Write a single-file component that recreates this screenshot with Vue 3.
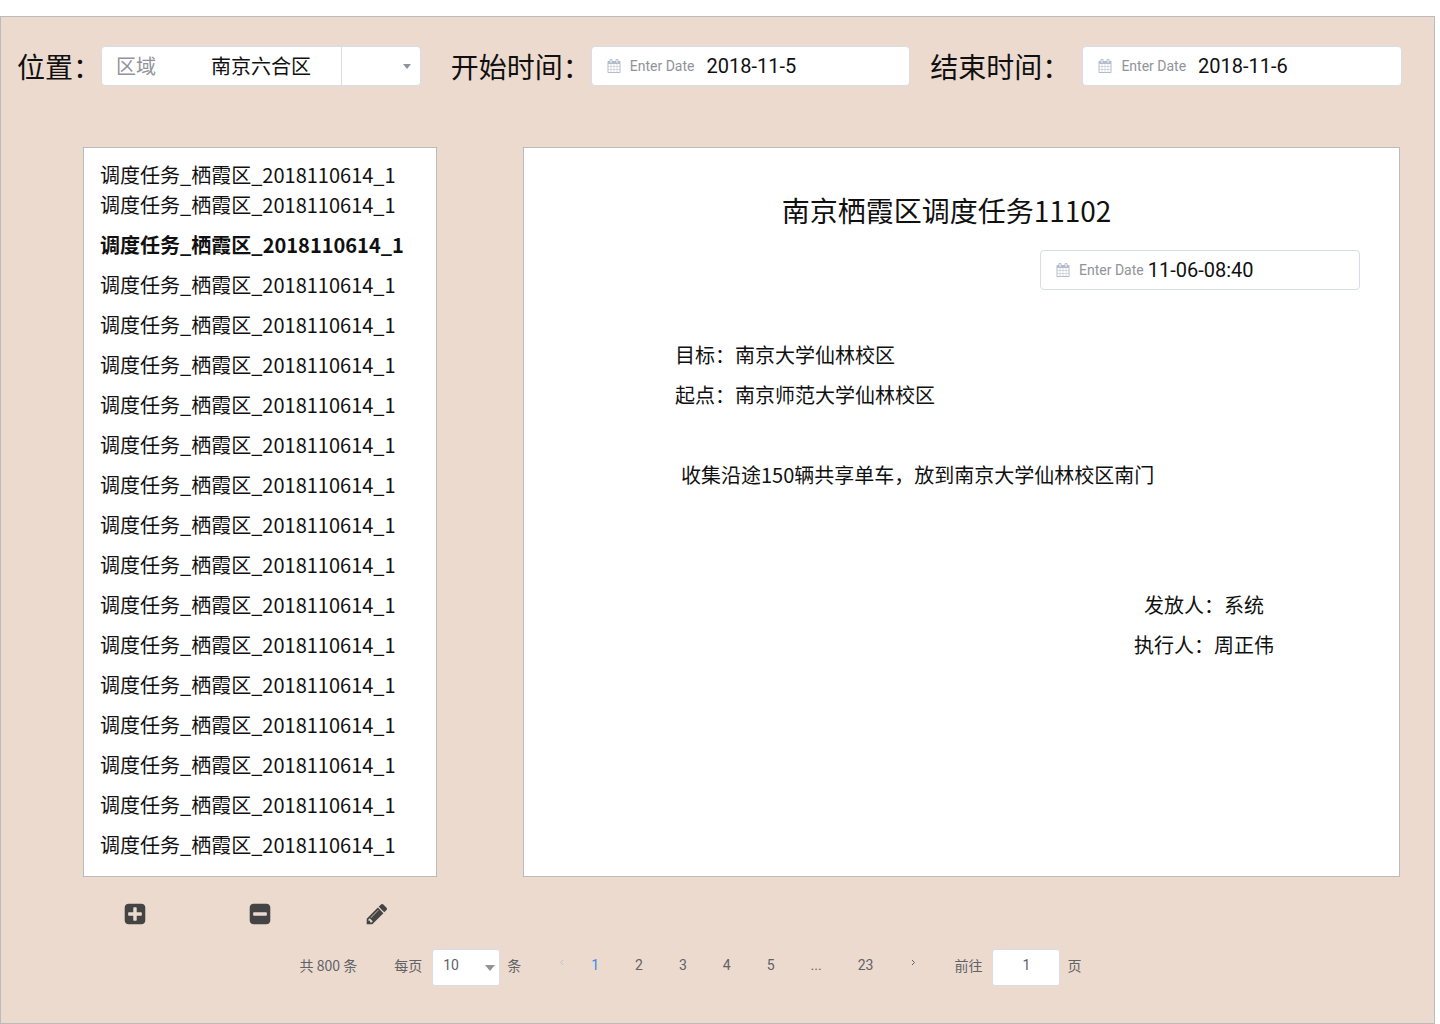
<script setup>
import { ref } from 'vue'

const region = ref('南京六合区')
const startDate = ref('2018-11-5')
const endDate = ref('2018-11-6')
const taskTime = ref('11-06-08:40')
const pageSize = ref('10')
const jumpTo = ref('1')
const currentPage = ref('1')
const selected = ref(2)

const tasks = Array.from({ length: 18 }, () => '调度任务_栖霞区_2018110614_1')
const pages = ['1', '2', '3', '4', '5', '...', '23']

const calendarPath =
  'M192 1664h288v-288h-288v288zm352 0h320v-288h-320v288zm-352-352h288v-320h-288v320zm352 0h320v-320h-320v320zm-352-384h288v-288h-288v288zm736 736h320v-288h-320v288zm-384-736h320v-288h-320v288zm768 736h288v-288h-288v288zm-384-352h320v-320h-320v320zm-352-864v-288q0-13-9.5-22.5t-22.5-9.5h-64q-13 0-22.5 9.5t-9.5 22.5v288q0 13 9.5 22.5t22.5 9.5h64q13 0 22.5-9.5t9.5-22.5zm736 864h288v-320h-288v320zm-384-384h320v-288h-320v288zm384 0h288v-288h-288v288zm32-480v-288q0-13-9.5-22.5t-22.5-9.5h-64q-13 0-22.5 9.5t-9.5 22.5v288q0 13 9.5 22.5t22.5 9.5h64q13 0 22.5-9.5t9.5-22.5zm384-64v1280q0 52-38 90t-90 38h-1408q-52 0-90-38t-38-90v-1280q0-52 38-90t90-38h128v-96q0-66 47-113t113-47h64q66 0 113 47t47 113v96h384v-96q0-66 47-113t113-47h64q66 0 113 47t47 113v96h128q52 0 90 38t38 90z'
const squarePath =
  'm256-544v960q0 119-84.5 203.5t-203.5 84.5h-960q-119 0-203.5-84.5t-84.5-203.5v-960q0-119 84.5-203.5t203.5-84.5h960q119 0 203.5 84.5t84.5 203.5z'
const actions = [
  {
    label: '添加',
    path:
      'M1408 960v-128q0-26-19-45t-45-19h-320v-320q0-26-19-45t-45-19h-128q-26 0-45 19t-19 45v320h-320q-26 0-45 19t-19 45v128q0 26 19 45t45 19h320v320q0 26 19 45t45 19h128q26 0 45-19t19-45v-320h320q26 0 45-19t19-45z' +
      squarePath,
  },
  {
    label: '删除',
    path:
      'M1408 960v-128q0-26-19-45t-45-19h-896q-26 0-45 19t-19 45v128q0 26 19 45t45 19h896q26 0 45-19t19-45z' +
      squarePath,
  },
  {
    label: '编辑',
    path:
      'M491 1536l91-91-235-235-91 91v107h128v128h107zm523-928q0-22-22-22-10 0-17 7l-542 542q-7 7-7 17 0 22 22 22 10 0 17-7l542-542q7-7 7-17zm-54-192l416 416-832 832h-416v-416zm683 96q0 53-37 90l-166 166-416-416 166-165q36-38 90-38 53 0 91 38l235 234q37 39 37 91z',
  },
]
</script>

<template>
  <main class="page">
    <form class="filters" @submit.prevent>
      <div class="filter">
        <label class="filter-label" for="region">位置：</label>
        <div class="field">
          <span class="field-prefix">区域</span>
          <div class="region">
            <select id="region" v-model="region" class="region-select">
              <option>南京六合区</option>
            </select>
            <span class="region-toggle"><i class="caret"></i></span>
          </div>
        </div>
      </div>
      <div class="filter filter-start">
        <label class="filter-label" for="start">开始时间：</label>
        <div class="field date">
          <svg class="calendar" viewBox="0 0 1792 1792"><path :d="calendarPath" /></svg>
          <label class="date-hint" for="start">Enter Date</label>
          <input id="start" v-model="startDate" class="date-input" type="text" />
        </div>
      </div>
      <div class="filter filter-end">
        <label class="filter-label" for="end">结束时间：</label>
        <div class="field date">
          <svg class="calendar" viewBox="0 0 1792 1792"><path :d="calendarPath" /></svg>
          <label class="date-hint" for="end">Enter Date</label>
          <input id="end" v-model="endDate" class="date-input" type="text" />
        </div>
      </div>
    </form>

    <div class="content">
      <ul class="tasks">
        <li v-for="(task, i) in tasks" :key="i">
          <button
            type="button"
            class="task"
            :class="{ active: i === selected }"
            @click="selected = i"
          >{{ task }}</button>
        </li>
      </ul>

      <article class="detail">
        <h1 class="title">南京栖霞区调度任务11102</h1>
        <div class="field date date-compact">
          <svg class="calendar" viewBox="0 0 1792 1792"><path :d="calendarPath" /></svg>
          <label class="date-hint" for="time">Enter Date</label>
          <input id="time" v-model="taskTime" class="date-input" type="text" />
        </div>
        <div class="body">
          <p>目标：南京大学仙林校区</p>
          <p>起点：南京师范大学仙林校区</p>
          <p class="note">收集沿途150辆共享单车，放到南京大学仙林校区南门</p>
        </div>
        <div class="signature">
          <p>发放人：系统</p>
          <p>执行人：周正伟</p>
        </div>
      </article>
    </div>

    <div class="actions">
      <button
        v-for="action in actions"
        :key="action.label"
        type="button"
        class="action"
        :aria-label="action.label"
      >
        <svg viewBox="0 0 1792 1792"><path :d="action.path" /></svg>
      </button>
    </div>

    <nav class="pagination">
      <span class="total">共 800 条</span>
      <div class="size">
        <label class="before-box" for="size">每页</label>
        <div class="size-box">
          <select id="size" v-model="pageSize" class="box size-select">
            <option>10</option>
          </select>
          <i class="caret caret-large"></i>
        </div>
        <span class="after-box">条</span>
      </div>
      <div class="pager">
        <button type="button" class="arrow" aria-label="上一页" disabled>
          <svg viewBox="0 0 8 8"><path d="M5 1 2.500 3.500 5 6" /></svg>
        </button>
        <button
          v-for="page in pages"
          :key="page"
          type="button"
          class="page-link"
          :class="{ current: page === currentPage }"
          @click="currentPage = page"
        >{{ page }}</button>
        <button type="button" class="arrow" aria-label="下一页">
          <svg viewBox="0 0 8 8"><path d="M3 1 5.500 3.500 3 6" /></svg>
        </button>
      </div>
      <div class="jump">
        <label class="before-box" for="jump">前往</label>
        <input id="jump" v-model="jumpTo" class="box jump-input" type="text" />
        <span class="after-box">页</span>
      </div>
    </nav>
  </main>
</template>

<style>
body {
  background: #fff;
}
</style>

<style scoped>
* {
  box-sizing: border-box;
}

.page {
  margin: 16px 5px 0 0;
  padding: 29px 32px 37px 16px;
  border: 1px solid #bbb;
  background: #ecdacf;
  color: #101010;
  font-family: 'Noto Sans CJK SC', sans-serif;
  font-size: 20px;
  line-height: 30px;
}

button,
input,
select {
  margin: 0;
  padding: 0;
  border: 0;
  background: none;
  color: inherit;
  font: inherit;
  appearance: none;
}

button {
  cursor: pointer;
}

p,
h1,
ul {
  margin: 0;
  padding: 0;
}

.filters {
  display: flex;
  gap: 20px;
}

.filter {
  display: flex;
  flex: 1 1 auto;
  align-items: center;
  min-width: 0;
}

.filter-start {
  margin-left: 10px;
}

.filter-end .filter-label {
  margin-right: 12px;
}

.filter-label {
  flex: none;
  font-size: 28px;
  line-height: 40px;
}

.field {
  display: flex;
  flex: 1 1 auto;
  align-items: center;
  width: 320px;
  min-width: 0;
  height: 40px;
  border: 1px solid #d8dce5;
  border-radius: 4px;
  background: #fff;
}

.field-prefix {
  flex: none;
  width: 109px;
  padding-left: 14px;
  color: #909399;
}

.region {
  display: grid;
  flex: 1;
  grid-template-columns: 1fr 79px;
  height: 100%;
}

.region-select {
  grid-area: 1 / 1 / 2 / 3;
  min-width: 0;
}

.region-toggle {
  display: flex;
  grid-area: 1 / 2;
  align-items: center;
  justify-content: flex-end;
  padding-right: 9px;
  border-left: 1px solid #d8dce5;
  pointer-events: none;
}

.caret {
  border: 4px solid transparent;
  border-top: 5px solid #909399;
  border-bottom: 0;
}

.caret-large {
  border-width: 6px 5px 0;
}

.date {
  padding-left: 15px;
  font-family: Roboto, sans-serif;
}

.calendar {
  flex: none;
  width: 14px;
  height: 14px;
  margin-right: 9px;
  fill: #b4bccc;
}

.date-hint {
  flex: none;
  margin-right: 12px;
  color: #909399;
  font-size: 14px;
}

.date-input {
  flex: 1;
  min-width: 0;
  height: 30px;
}

.date-compact .date-hint {
  margin-right: 4px;
}

.content {
  display: flex;
  gap: 86px;
  margin: 61px 2px 0 66px;
}

.tasks {
  flex: 0 0 354px;
  padding: 12px 16px 16px;
  border: 1px solid #bbb;
  background: #fff;
  list-style: none;
}

.tasks li + li {
  margin-top: 10px;
}

.tasks li:nth-child(2) {
  margin-top: 0;
}

.task {
  display: block;
  white-space: nowrap;
}

.active {
  font-weight: 700;
}

.detail {
  display: flex;
  flex: 1;
  flex-direction: column;
  padding: 42px 39px 16px;
  border: 1px solid #bbb;
  background: #fff;
}

.title {
  padding-right: 30px;
  font-size: 28px;
  font-weight: 400;
  line-height: 40px;
  text-align: center;
}

.detail .field {
  flex: none;
  align-self: flex-end;
  width: 320px;
  margin-top: 20px;
}

.body {
  margin: 45px 0 0 112px;
  line-height: 40px;
}

.note {
  margin-top: 40px;
  padding-left: 6px;
}

.signature {
  align-self: flex-end;
  margin: 90px 86px 0 0;
  line-height: 40px;
  text-align: center;
}

.actions {
  display: grid;
  grid-template-columns: 125px 117px 24px;
  margin: 25px 0 0 106px;
}

.action {
  display: flex;
  width: 24px;
}

.action svg {
  width: 24px;
  height: 24px;
  fill: #444;
}

.pagination {
  display: flex;
  align-items: center;
  justify-content: center;
  gap: 37px;
  margin-top: 23px;
  padding-right: 38px;
  color: #606266;
  font-size: 14px;
  line-height: 20px;
}

.size,
.jump {
  display: flex;
  align-items: center;
}

.total,
.before-box,
.after-box,
.pager {
  padding-bottom: 6px;
}

.before-box {
  margin-right: 10px;
}

.after-box {
  margin-left: 7px;
}

.box {
  width: 68px;
  height: 37px;
  border: 1px solid #d8dce5;
  border-radius: 3px;
  background: #fff;
  font-family: Roboto, sans-serif;
}

.size-box {
  display: flex;
  align-items: center;
}

.size-select {
  padding: 0 20px 6px 10px;
}

.size-box .caret {
  margin-left: -15px;
  margin-right: 5px;
  pointer-events: none;
}

.jump-input {
  padding-bottom: 6px;
  text-align: center;
}

.pager {
  display: flex;
  align-items: center;
  gap: 36px;
  font-family: Roboto, sans-serif;
}

.arrow {
  display: flex;
  padding-bottom: 4px;
}

.arrow svg {
  width: 8px;
  height: 8px;
  fill: none;
  stroke: #606266;
}

.arrow:disabled {
  margin-right: -11px;
}

.arrow:disabled svg {
  stroke: #c0c4cc;
}

.current {
  color: #2d8cf0;
}
</style>
